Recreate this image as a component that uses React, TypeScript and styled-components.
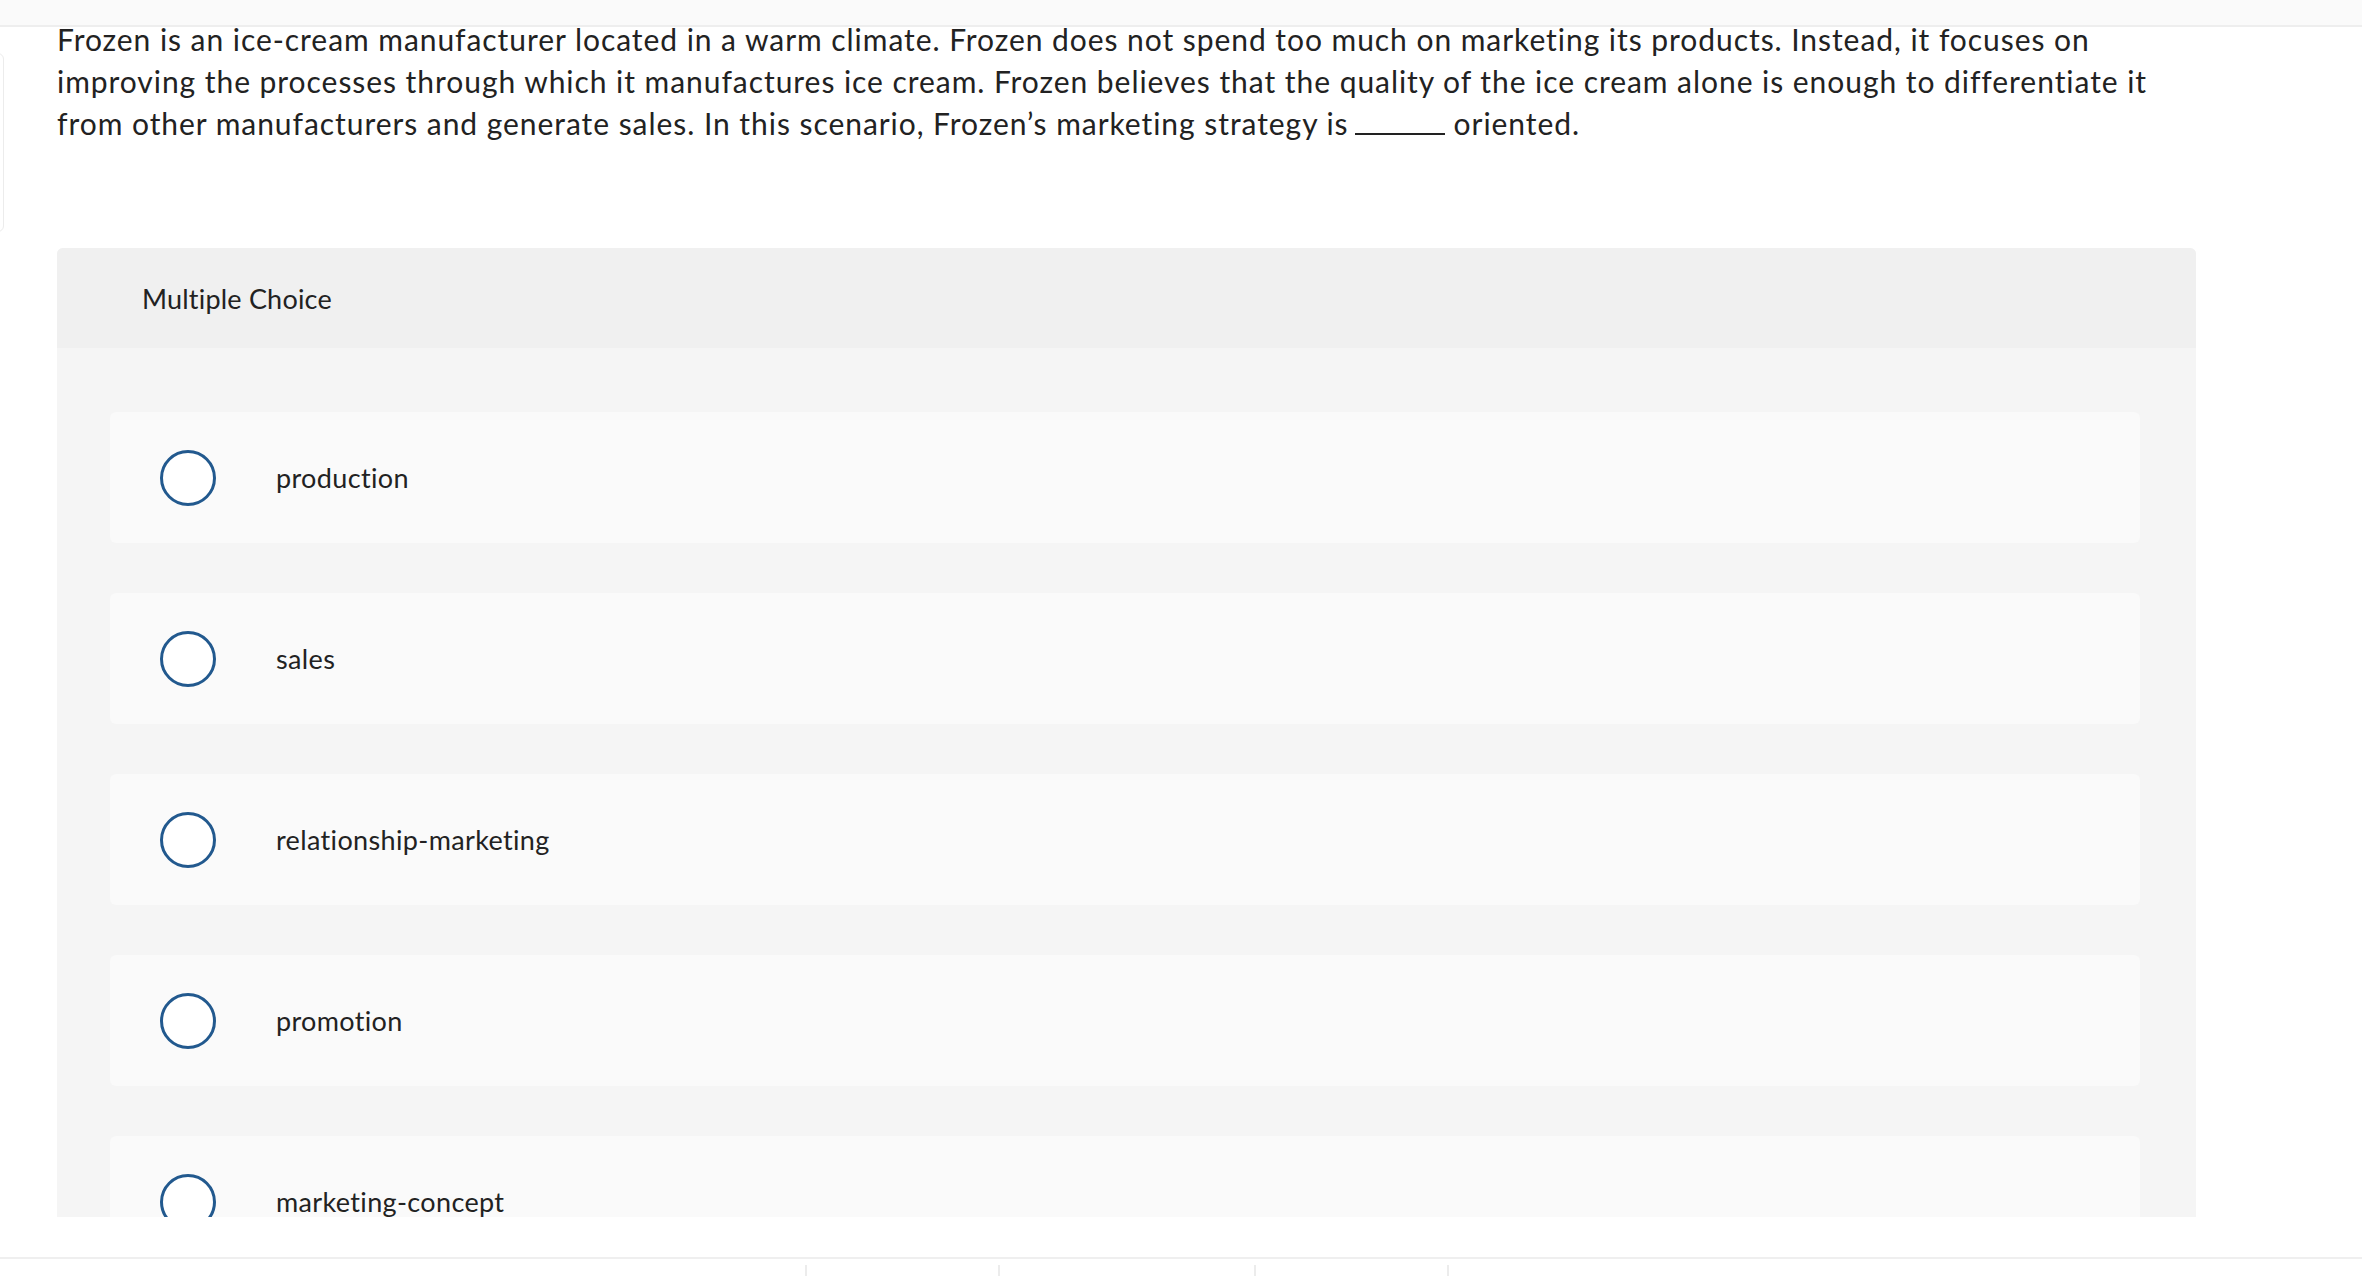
import styled, { createGlobalStyle } from "styled-components";

const GlobalStyle = createGlobalStyle`
  html, body {
    margin: 0;
    padding: 0;
    background: #ffffff;
  }
  body {
    font-family: Lato, "Noto Sans", "Liberation Sans", sans-serif;
    color: #222222;
  }
`;

const Page = styled.div`
  display: flex;
  flex-direction: column;
  height: 1276px;
  overflow: hidden;
`;

const TopBar = styled.div`
  height: 25px;
  flex-shrink: 0;
  background: #fafafa;
  border-bottom: 2px solid #eeeeee;
`;

const ScrollArea = styled.div`
  height: 1190px;
  flex-shrink: 0;
  overflow: hidden;
`;

// content is scrolled a little, so it starts above the visible area
const ScrollInner = styled.div`
  display: flex;
  margin-top: -9px;
`;

const StubColumn = styled.div`
  width: 57px;
  flex-shrink: 0;
`;

const StubBox = styled.div`
  margin-top: 35px;
  margin-left: -20px;
  width: 22px;
  height: 177px;
  border: 1px solid #ececec;
  border-radius: 6px;
  background: #ffffff;
`;

const MainColumn = styled.div`
  width: 2139px;
  flex-shrink: 0;
`;

const QuestionText = styled.p`
  margin: 0;
  font-size: 30px;
  line-height: 42px;
  letter-spacing: 0.95px;
  color: #222222;
`;

const Blank = styled.span`
  display: inline-block;
  width: 90px;
  border-bottom: 2px solid #222222;
  margin: 0 9px 0 6px;
`;

const Panel = styled.section`
  margin-top: 104px;
  background: #f5f5f5;
  border-radius: 6px 6px 0 0;
`;

const PanelHeader = styled.div`
  height: 100px;
  display: flex;
  align-items: center;
  padding-left: 85px;
  background: #f0f0f0;
  border-radius: 6px 6px 0 0;
  font-size: 27px;
  letter-spacing: 0.2px;
  color: #222222;
`;

const OptionList = styled.div`
  display: flex;
  flex-direction: column;
  gap: 50px;
  padding: 64px 56px 60px 53px;
`;

const OptionCard = styled.label`
  height: 131px;
  display: flex;
  align-items: center;
  padding-left: 50px;
  background: #fafafa;
  border-radius: 6px;
  cursor: pointer;
`;

const Radio = styled.span`
  width: 56px;
  height: 56px;
  box-sizing: border-box;
  border: 3px solid #22598e;
  border-radius: 50%;
  background: #ffffff;
  flex-shrink: 0;
`;

const OptionText = styled.span`
  margin-left: 60px;
  font-size: 27px;
  letter-spacing: 0.35px;
  color: #222222;
`;

const FooterGap = styled.div`
  height: 40px;
  flex-shrink: 0;
`;

const Footer = styled.footer`
  border-top: 2px solid #efefef;
  padding-top: 6px;
  padding-left: 805px;
  display: flex;
`;

const FooterItem = styled.div<{ $w: number }>`
  box-sizing: border-box;
  width: ${(p) => p.$w}px;
  height: 30px;
  border-left: 2px solid #ececec;
`;

const options = [
  "production",
  "sales",
  "relationship-marketing",
  "promotion",
  "marketing-concept",
];

export default function App() {
  return (
    <>
      <GlobalStyle />
      <Page>
        <TopBar />
        <ScrollArea>
          <ScrollInner>
            <StubColumn>
              <StubBox />
            </StubColumn>
            <MainColumn>
              <QuestionText>
                Frozen is an ice-cream manufacturer located in a warm climate.
                Frozen does not spend too much on marketing its products.
                Instead, it focuses on improving the processes through which it
                manufactures ice cream. Frozen believes that the quality of the
                ice cream alone is enough to differentiate it from other
                manufacturers and generate sales. In this scenario, Frozen’s
                marketing strategy is<Blank />oriented.
              </QuestionText>
              <Panel>
                <PanelHeader>Multiple Choice</PanelHeader>
                <OptionList>
                  {options.map((o) => (
                    <OptionCard key={o}>
                      <Radio />
                      <OptionText>{o}</OptionText>
                    </OptionCard>
                  ))}
                </OptionList>
              </Panel>
            </MainColumn>
          </ScrollInner>
        </ScrollArea>
        <FooterGap />
        <Footer>
          <FooterItem $w={193} />
          <FooterItem $w={256} />
          <FooterItem $w={193} />
          <FooterItem $w={120} />
        </Footer>
      </Page>
    </>
  );
}
